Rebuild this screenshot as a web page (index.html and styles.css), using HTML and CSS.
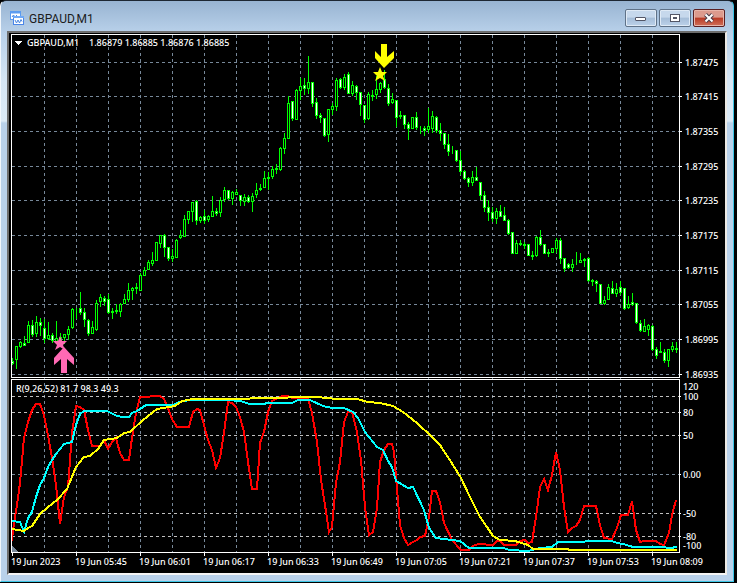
FILE: index.html
```html
<!DOCTYPE html>
<html lang="en">
<head>
    <meta charset="utf-8">
    <meta name="viewport" content="width=device-width, initial-scale=1.0">
    <title>GBPAUD,M1</title>
    <link rel="stylesheet" href="styles.css">
</head>
<body>
    <div class="window">
        <header class="titlebar">
            <svg class="app-icon" viewBox="0 0 14 14" aria-hidden="true">
                <rect x="0.5" y="0.5" width="10" height="8" fill="#fff" stroke="#5b9bf0"/>
                <path d="M0 1.5h11" stroke="#5b9bf0" stroke-width="2"/>
                <path d="M2 6l1.5-2L5 6l2-2" fill="none" stroke="#4a86e0"/>
                <rect x="3.5" y="5.5" width="10" height="8" fill="#fff" stroke="#4a86e8"/>
                <path d="M3 6h11" stroke="#6fa8f5" stroke-width="2"/>
                <path d="M5 9l1.5 3L8 9l1.5 3L11 8.5l1 2" fill="none" stroke="#4a86e0"/>
            </svg>
            <h1 class="title">GBPAUD,M1</h1>
            <div class="controls">
                <button type="button" class="control" aria-label="Minimize">
                    <svg viewBox="0 0 12 10"><rect x="0.5" y="4.5" width="10" height="3" rx="0.5" fill="#fff" stroke="#535666"/></svg>
                </button>
                <button type="button" class="control" aria-label="Maximize">
                    <svg viewBox="0 0 12 10"><rect x="1.5" y="1.5" width="9" height="7" fill="#fff" stroke="#535666"/><rect x="4.5" y="4.5" width="3" height="1" fill="#b9cfe8" stroke="#535666"/></svg>
                </button>
                <button type="button" class="control close" aria-label="Close">
                    <svg viewBox="0 0 12 10"><path d="M2.5 1.5L9.5 8.5M9.5 1.5L2.5 8.5" stroke="#4b3d4a" stroke-width="4"/><path d="M2.5 1.5L9.5 8.5M9.5 1.5L2.5 8.5" stroke="#fff" stroke-width="2"/></svg>
                </button>
            </div>
        </header>
        <main class="client">
            <svg id="chart" class="chart" viewBox="9 33 716 540" role="img" aria-label="GBPAUD one minute chart"></svg>
        </main>
    </div>
    <script src="chart.js"></script>
</body>
</html>
```
FILE: styles.css
```css
* {
    box-sizing: border-box;
}

body {
    margin: 0;
    background-color: #000;
    font-family: "Noto Sans", "Open Sans", sans-serif;
}

.window {
    padding: 0 6px 6px;
    border: 1px solid #1d2733;
    border-left-color: #f2f7fc;
    border-right: 1px solid #3cc6e6;
    border-bottom-color: #3cc6e6;
    border-radius: 6px 6px 0 0;
    margin: 0 3px 1px 0;
    background: linear-gradient(#98b4d2, #b9d1ea 32px, #d6e6f4 80px, #dceaf6 120px, #b9d1ea 122px);
}

.titlebar {
    display: flex;
    align-items: center;
    gap: 5px;
    height: 30px;
    padding: 4px 0 0 3px;
}

.app-icon {
    width: 14px;
    height: 14px;
}

.title {
    flex: 1;
    margin: 0;
    padding-top: 2px;
    font-family: Roboto, sans-serif;
    font-size: 12px;
    font-weight: 400;
    line-height: 16px;
    color: #1c1c1c;
}

.controls {
    display: flex;
    gap: 2px;
    padding-right: 2px;
}

.control {
    display: flex;
    align-items: center;
    justify-content: center;
    width: 32px;
    height: 18px;
    padding: 0;
    border: 1px solid #5f7288;
    border-radius: 2px;
    background: linear-gradient(#c6d8ec 45%, #a5bdd8 50%, #bcd2ea);
    box-shadow: inset 0 0 0 1px #dfeaf6;
}

.control svg {
    width: 12px;
    height: 10px;
}

.close {
    border-color: #5a1f22;
    background: linear-gradient(#dc9a8d 45%, #b93a25 50%, #d0705a);
    box-shadow: inset 0 0 0 1px #e8b5aa;
}

.client {
    border: 2px solid #6d6d6d;
    border-right-color: #ece9e4;
    border-bottom-color: #f4f4f4;
    background-color: #000;
}

.chart {
    display: block;
    width: 100%;
    height: auto;
    shape-rendering: crispEdges;
}

.frame {
    fill: none;
    stroke: #fff;
}

.tick {
    stroke: #fff;
}

.grid {
    stroke: #778899;
    stroke-dasharray: 3 3;
}

.level {
    stroke: #c0c0c0;
    stroke-dasharray: 3 3;
}

.wick {
    stroke: #0f0;
}

.up {
    fill: #000;
    stroke: #0f0;
}

.down {
    fill: #fff;
    stroke: #0f0;
}

.line {
    fill: none;
    stroke-width: 2;
}

.fast {
    stroke: #f00;
}

.medium {
    stroke: #0ff;
}

.slow {
    stroke: #ff0;
}

.buy,
.sell {
    shape-rendering: auto;
}

.buy {
    fill: #ff69b4;
}

.sell {
    fill: #ff0;
}

.marker {
    fill: #fff;
}

.corner {
    fill: #778899;
}

.label {
    fill: #fff;
    font-size: 9px;
    font-weight: 500;
}
```
FILE: chart.js
```javascript
const chart = document.getElementById('chart');

// high, body top, body bottom, low, direction (u = up, d = down)
const candles = `
358 361 363 364 d,346 346 359 368 u,341 342 346 347 u,336 343 345 345 d,321 325 342 342 u,
320 325 334 336 d,316 322 333 336 u,318 322 325 335 d,319 328 338 342 d,322 335 338 339 u,
333 335 340 342 d,321 338 341 343 u,333 337 341 343 d,334 334 337 343 u,326 329 334 339 u,
308 309 327 328 u,308 309 309 318 u,292 308 312 314 d,308 312 319 326 d,319 320 333 335 d,
321 327 333 333 u,300 303 329 330 u,294 297 301 306 u,296 298 301 305 d,294 299 312 313 d,
308 311 312 318 d,304 310 311 313 u,303 304 311 316 u,294 299 303 303 u,283 290 299 301 u,
287 288 290 299 u,283 287 288 293 u,273 275 290 290 u,267 270 275 275 u,260 262 269 269 u,
252 260 263 265 u,242 242 260 260 u,235 235 243 247 u,234 235 247 256 d,247 247 258 260 d,
249 256 258 261 u,239 240 257 257 u,230 235 237 238 u,215 219 236 236 u,211 211 219 223 u,
202 202 211 221 u,200 201 220 224 d,216 217 220 222 u,210 216 220 223 d,215 216 219 221 u,
196 211 216 216 u,208 211 213 215 d,197 200 212 216 u,187 190 199 201 u,190 190 198 199 d,
191 192 198 204 u,189 192 194 194 u,195 195 200 205 d,194 197 201 205 u,195 197 201 202 d,
193 196 201 211 u,183 190 194 197 u,184 188 189 190 d,171 178 187 187 u,172 177 178 189 u,
166 169 176 178 u,164 168 169 173 d,147 148 169 170 u,133 138 148 153 u,96 103 138 138 u,
101 101 118 120 d,89 90 119 119 u,78 86 90 99 u,78 85 88 94 d,56 82 88 93 u,
82 82 103 106 d,98 102 115 118 d,113 115 117 122 d,118 118 135 136 d,109 109 134 141 u,
103 106 109 114 u,78 80 106 110 u,78 79 87 88 d,74 77 87 89 u,72 74 93 93 d,
81 85 93 95 u,85 86 92 99 d,92 92 104 115 d,105 105 119 122 d,92 94 118 119 u,
90 95 96 100 d,76 89 94 98 u,82 83 89 92 u,70 79 87 88 d,84 88 103 105 d,
93 99 102 103 u,100 100 117 126 d,111 115 116 118 d,115 115 124 128 d,122 124 128 139 d,
117 117 128 128 u,112 117 127 129 d,126 127 127 133 u,126 128 130 135 d,108 126 129 132 u,
111 116 128 132 u,116 117 130 132 d,123 130 133 140 d,133 133 144 148 d,134 144 151 155 d,
146 150 150 153 u,150 150 160 161 d,151 160 171 174 d,170 171 178 179 d,177 178 182 186 d,
171 177 182 185 u,167 177 180 180 d,182 182 195 199 d,191 195 207 211 d,200 207 212 220 d,
207 212 218 221 d,208 211 218 223 u,205 211 216 216 d,207 215 220 220 d,219 220 233 234 d,
232 232 253 253 d,240 243 253 253 u,240 243 244 245 d,242 244 245 248 d,244 244 255 255 d,
251 255 256 259 d,236 237 255 256 u,230 237 244 245 d,244 244 253 253 d,249 252 253 256 d,
248 248 252 252 u,238 240 248 252 u,238 240 258 263 d,258 258 268 271 d,263 264 267 268 d,
259 264 267 271 u,252 261 261 264 u,253 260 262 262 u,258 259 260 266 u,257 258 280 281 d,
279 280 281 285 d,280 281 283 291 d,284 284 303 303 d,296 300 303 304 u,284 287 299 299 u,
281 288 293 293 d,283 289 293 296 u,281 287 292 294 d,288 288 308 309 d,296 304 307 308 u,
293 302 304 305 d,303 303 322 323 d,320 323 330 331 d,319 326 331 331 u,324 325 329 335 u,
325 326 349 350 d,347 349 355 358 d,342 351 352 352 u,349 352 360 362 d,349 349 360 366 u,
342 346 349 351 u,342 348 349 352 u`.trim().split(',');

const fast = '12,541 13,530 17,505 20,483 24,438 28,422 32,410 36,404 40,404 44,415 48,435 52,458 56,485 60,524 64,497 68,487 72,433 76,406 80,407 84,410 88,430 92,446 100,446 104,440 108,449 112,442 116,438 120,453 124,460 129,460 132,438 136,413 140,397 148,397 152,396 160,396 164,399 168,408 172,419 177,427 189,427 193,412 197,409 200,410 204,425 208,440 212,450 216,468 220,458 224,433 228,402 232,403 236,407 240,417 244,432 248,462 252,489 257,489 260,443 264,432 268,412 272,401 276,399 282,396 288,396 292,398 308,399 312,413 317,442 321,480 325,505 329,532 332,527 336,483 340,462 344,422 348,412 352,412 357,432 361,460 365,507 369,535 373,532 377,508 380,462 384,450 388,444 392,444 394,452 396,477 400,525 404,538 408,545 413,542 417,540 420,537 425,536 429,517 432,491 436,491 440,502 444,523 452,540 461,550 469,550 473,546 478,544 493,545 497,541 500,541 504,545 516,545 520,541 525,540 528,543 532,542 536,517 540,487 544,479 548,490 552,475 556,452 560,470 564,507 568,532 572,528 576,526 580,520 584,506 596,506 600,525 604,538 612,539 617,528 621,515 628,515 632,501 636,530 640,542 644,541 656,541 660,544 664,545 669,533 672,515 676,500';

const medium = '12,521 20,522 24,532 28,518 32,512 36,497 40,485 44,478 48,467 52,460 56,454 64,444 72,442 76,425 80,414 84,411 107,411 117,416 123,417 129,417 132,413 137,411 146,405 173,405 182,401 192,400 227,400 240,401 250,404 263,404 268,403 292,403 298,400 310,400 323,406 332,408 344,408 353,412 358,418 365,432 377,447 383,450 388,461 392,467 396,481 408,488 413,487 424,510 429,528 436,538 460,541 469,548 503,548 510,550 528,551 540,548 552,547 558,542 583,542 587,541 612,541 617,543 623,544 633,547 662,547 670,548 677,547';

const slow = '12,529 24,531 28,528 32,526 40,514 48,507 57,500 67,489 76,467 84,457 90,456 98,449 104,440 117,438 124,433 130,432 143,420 157,409 175,406 182,401 193,399 240,399 260,398 317,397 337,399 357,399 368,402 380,403 393,406 403,412 417,423 432,437 440,445 453,465 461,478 470,497 480,517 487,527 493,536 500,540 515,541 528,545 533,549 567,549 570,550 677,550';

const prices = [[62, '1.87475'], [96, '1.87415'], [131, '1.87355'], [166, '1.87295'], [200, '1.87235'],
    [235, '1.87175'], [270, '1.87115'], [304, '1.87055'], [339, '1.86995'], [374, '1.86935']];
const levels = [[396, '100'], [412, '80'], [435, '50'], [474, '0.00'], [513, '-50'], [536, '-80']];
const times = ['19 Jun 2023', '19 Jun 05:45', '19 Jun 06:01', '19 Jun 06:17', '19 Jun 06:33', '19 Jun 06:49',
    '19 Jun 07:05', '19 Jun 07:21', '19 Jun 07:37', '19 Jun 07:53', '19 Jun 08:09'];

let out = '';

function line(cls, x1, y1, x2, y2) {
    out += `<path class="${cls}" d="M${x1} ${y1}L${x2} ${y2}"/>`;
}

function label(x, y, text) {
    out += `<text class="label" x="${x}" y="${y}">${text}</text>`;
}

function polyline(cls, points) {
    out += `<polyline class="line ${cls}" points="${points}"/>`;
}

// grid
for (let x = 44; x < 679; x += 32) {
    line('grid', x + 0.5, 35, x + 0.5, 552);
}
prices.forEach(([y]) => line('grid', 12, y + 0.5, 679, y + 0.5));
levels.forEach(([y, text]) => line(text === '0.00' ? 'grid' : 'level', 12, y + 0.5, 679, y + 0.5));

// candles
candles.forEach((row, i) => {
    const [high, top, bottom, low, dir] = row.trim().split(' ');
    const x = 12 + i * 4;
    line('wick', x + 0.5, high, x + 0.5, +low + 1);
    out += `<rect class="${dir === 'u' ? 'up' : 'down'}" x="${x - 0.5}" y="${+top + 0.5}" width="2" height="${bottom - top}"/>`;
});

// signals
out += '<polygon class="buy" points="60,336 62,341 67,341 63,345 65,350 60,347 55,350 57,345 53,341 58,341"/>';
out += '<polygon class="buy" points="64,347 74,358 74,365 67,359 67,373 61,373 61,359 54,365 54,358"/>';
out += '<polygon class="sell" points="380,67 382,72 387,72 383,76 385,81 380,78 375,81 377,76 373,72 378,72"/>';
out += '<polygon class="sell" points="384,68 394,58 394,51 387,57 387,44 381,44 381,57 375,51 375,58"/>';

// oscillator
polyline('fast', fast);
polyline('medium', medium);
polyline('slow', slow);

// frames and axes
out += '<rect class="frame" x="11.5" y="34.5" width="668" height="343"/>';
out += '<rect class="frame" x="11.5" y="379.5" width="668" height="173"/>';
out += '<polygon class="corner" points="12,546 18,552 12,552"/>';
prices.forEach(([y, text]) => {
    line('tick', 680, y + 0.5, 682, y + 0.5);
    label(685, y + 4, text);
});
levels.forEach(([y, text]) => {
    line('tick', 680, y + 0.5, 681, y + 0.5);
    label(683, y + 4, text);
});
label(683, 390, '120');
label(683, 549, '-100');
times.forEach((text, i) => {
    line('tick', 12.5 + i * 64, 553, 12.5 + i * 64, 556);
    label(11 + i * 64, 565, text);
});

out += '<polygon class="marker" points="15,41 22,41 18.5,45"/>';
label(27, 46, 'GBPAUD,M1');
label(89, 46, '1.86879 1.86885 1.86876 1.86885');
label(16, 392, 'R(9,26,52) 81.7 98.3 49.3');

chart.innerHTML = out;
```
